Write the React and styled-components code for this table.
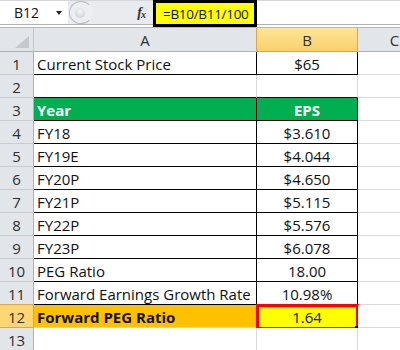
import React from 'react';
import styled, { createGlobalStyle, css } from 'styled-components';

const Global = createGlobalStyle`
  html, body { margin: 0; padding: 0; background: #fff; }
  body {
    width: 400px;
    height: 350px;
    overflow: hidden;
    font-family: "Open Sans", "Liberation Sans", sans-serif;
  }
`;

const Sheet = styled.div`
  width: 400px;
  height: 350px;
  overflow: hidden;
  display: flex;
  flex-direction: column;
  background: #fff;
`;

const FormulaBar = styled.div`
  display: flex;
  height: 25px;
  flex: none;
  box-sizing: border-box;
  border-top: 1px solid #d4d6d9;
  border-bottom: 1px solid #aeb1b5;
  background: #fff;
`;

const NameBox = styled.div`
  width: 68px;
  display: flex;
  align-items: center;
  padding-left: 14px;
  box-sizing: border-box;
  font-size: 14px;
  color: #111;
`;

const DropArrow = styled.span`
  margin-left: auto;
  margin-right: 6px;
  width: 0;
  height: 0;
  border-left: 3.5px solid transparent;
  border-right: 3.5px solid transparent;
  border-top: 4px solid #222;
`;

const Splitter = styled.div`
  width: 85px;
  display: flex;
  align-items: center;
  background: #e9ebee;
  padding-right: 8px;
  box-sizing: border-box;
`;

const Knob = styled.div`
  width: 24px;
  height: 23px;
  margin-left: 1px;
  border-radius: 50%;
  box-sizing: border-box;
  border: 1px solid #b9bcc0;
  border-right-color: transparent;
  background: #eceef1;
  display: flex;
  align-items: center;
  padding-left: 5px;
`;

const KnobDot = styled.span`
  width: 10px;
  height: 10px;
  border-radius: 50%;
  background: radial-gradient(circle at 50% 35%, #f9f9f9, #c3c5c8);
`;

const Fx = styled.span`
  margin-left: auto;
  font-family: "Liberation Serif", serif;
  font-style: italic;
  font-weight: bold;
  font-size: 14px;
  color: #333;
  letter-spacing: -1px;
  sub {
    font-size: 10px;
    vertical-align: baseline;
    position: relative;
    top: 1px;
  }
`;

const FormulaInput = styled.div`
  flex: 1;
  display: flex;
  align-items: flex-start;
  background: #fff;
`;

const FormulaBox = styled.div`
  width: 104px;
  height: 27px;
  margin-top: -1px;
  box-sizing: border-box;
  border: 3px solid #000;
  background: #ffff00;
  font-size: 13.5px;
  letter-spacing: -0.3px;
  color: #111;
  padding-left: 7px;
  padding-top: 1px;
  display: flex;
  align-items: center;
  white-space: nowrap;
  position: relative;
  z-index: 1;
`;

const BarGap = styled.div`
  height: 2px;
  flex: none;
  background: #fff;
`;

const gridCols = css`
  display: grid;
  grid-template-columns: 34px 223px 101px 74px;
`;

const HeaderRow = styled.div`
  ${gridCols};
  height: 25px;
  flex: none;
  box-sizing: border-box;
  border-top: 1px solid #b5b8bc;
`;

const ColHead = styled.div`
  box-sizing: border-box;
  display: flex;
  align-items: center;
  justify-content: center;
  font-size: 15px;
  color: #2e2e2e;
  padding-top: 1px;
  border-right: 1px solid ${(p) => (p.$active ? '#e2a445' : '#c2c5c9')};
  border-bottom: 1px solid ${(p) => (p.$active ? '#e2a445' : '#aeb1b5')};
  background: ${(p) =>
    p.$active ? 'linear-gradient(#fee598, #fbd06a)' : '#e2e5e9'};
  ${(p) => p.$active && css`border-left: 1px solid #e2a445; margin-left: -1px;`}
`;

const Corner = styled(ColHead)`
  position: relative;
  &::after {
    content: '';
    position: absolute;
    right: 4px;
    bottom: 3px;
    width: 0;
    height: 0;
    border-left: 14px solid transparent;
    border-bottom: 12px solid #c5c8cc;
  }
`;

const Row = styled.div`
  ${gridCols};
  height: 23px;
  flex: none;
`;

const RowHead = styled.div`
  box-sizing: border-box;
  display: flex;
  align-items: center;
  justify-content: center;
  font-size: 15px;
  color: #2e2e2e;
  padding-top: 2px;
  border-right: 1px solid ${(p) => (p.$active ? '#e2a445' : '#aeb1b5')};
  border-bottom: 1px solid ${(p) => (p.$active ? '#e2a445' : '#c9ccd0')};
  background: ${(p) => (p.$active ? '#fed674' : '#e2e5e9')};
  ${(p) => p.$active && css`border-top: 1px solid #e2a445; margin-top: -1px;`}
`;

const Cell = styled.div`
  position: relative;
  box-sizing: border-box;
  display: flex;
  align-items: center;
  justify-content: ${(p) => (p.$center ? 'center' : 'flex-start')};
  padding: 2px 0 0 ${(p) => (p.$center ? '0' : '3px')};
  font-size: 15px;
  white-space: nowrap;
  color: ${(p) => p.$color || '#111'};
  font-weight: ${(p) => (p.$bold ? 700 : 400)};
  background: ${(p) => p.$fill || '#fff'};
  border-right: 1px solid ${(p) => p.$right || '#d9d9d9'};
  border-bottom: 1px solid ${(p) => p.$bottom || '#d9d9d9'};
`;

const Selection = styled.div`
  position: absolute;
  left: -1px;
  top: -1px;
  right: -2px;
  bottom: -3px;
  border: 3px solid #ff0000;
  pointer-events: none;
  &::after {
    content: '';
    position: absolute;
    right: -4px;
    bottom: -4px;
    width: 5px;
    height: 5px;
    background: #000;
  }
`;

const rows = [
  { n: 1, a: 'Current Stock Price', b: '$65', boxed: true },
  { n: 2, topOfBox: true },
  { n: 3, a: 'Year', b: 'EPS', head: true, boxed: true },
  { n: 4, a: 'FY18', b: '$3.610', boxed: true },
  { n: 5, a: 'FY19E', b: '$4.044', boxed: true },
  { n: 6, a: 'FY20P', b: '$4.650', boxed: true },
  { n: 7, a: 'FY21P', b: '$5.115', boxed: true },
  { n: 8, a: 'FY22P', b: '$5.576', boxed: true },
  { n: 9, a: 'FY23P', b: '$6.078', boxed: true },
  { n: 10, a: 'PEG Ratio', b: '18.00', boxed: true },
  { n: 11, a: 'Forward Earnings Growth Rate', b: '10.98%', boxed: true },
  { n: 12, a: 'Forward PEG Ratio', b: '1.64', result: true },
  { n: 13 },
];

function DataRow({ r }) {
  const edge = r.boxed ? '#000' : undefined;
  const bottom = r.boxed || r.topOfBox ? '#000' : undefined;
  return (
    <Row>
      <RowHead $active={r.result}>{r.n}</RowHead>
      <Cell
        $right={edge || (r.result ? '#ffc000' : undefined)}
        $bottom={bottom}
        $fill={r.head ? '#00b050' : r.result ? '#ffc000' : undefined}
        $color={r.head ? '#fff' : undefined}
        $bold={r.head || r.result}
      >
        {r.a}
      </Cell>
      <Cell
        $center
        $right={edge}
        $bottom={bottom}
        $fill={r.head ? '#00b050' : r.result ? '#ffff00' : undefined}
        $color={r.head ? '#fff' : undefined}
        $bold={r.head}
      >
        {r.b}
        {r.result && <Selection />}
      </Cell>
      <Cell />
    </Row>
  );
}

export default function App() {
  return (
    <Sheet>
      <Global />
      <FormulaBar>
        <NameBox>
          B12
          <DropArrow />
        </NameBox>
        <Splitter>
          <Knob>
            <KnobDot />
          </Knob>
          <Fx>
            f<sub>x</sub>
          </Fx>
        </Splitter>
        <FormulaInput>
          <FormulaBox>=B10/B11/100</FormulaBox>
        </FormulaInput>
      </FormulaBar>
      <BarGap />
      <HeaderRow>
        <Corner />
        <ColHead>A</ColHead>
        <ColHead $active>B</ColHead>
        <ColHead>C</ColHead>
      </HeaderRow>
      {rows.map((r) => (
        <DataRow key={r.n} r={r} />
      ))}
    </Sheet>
  );
}
